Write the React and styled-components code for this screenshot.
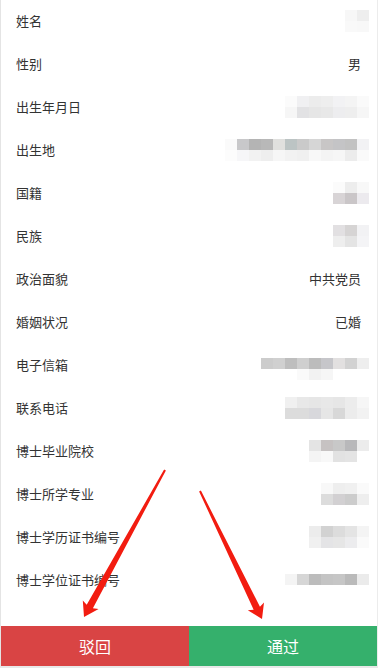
import React from "react";
import styled, { createGlobalStyle } from "styled-components";

const Global = createGlobalStyle`
  html, body { margin: 0; padding: 0; background: #ffffff; }
  body { font-family: "Noto Sans CJK SC", "Noto Sans", sans-serif; }
  * { box-sizing: border-box; }
`;

const Page = styled.div`
  position: relative;
  width: 378px;
  height: 668px;
  background: #ffffff;
  border-left: 1px solid #e4e4e4;
  border-right: 1px solid #ececec;
  border-bottom: 2px solid #e8e8e8;
  display: flex;
  flex-direction: column;
  overflow: hidden;
`;

const List = styled.div`
  display: flex;
  flex-direction: column;
  padding-bottom: 24px;
`;

const Row = styled.div`
  height: 43px;
  display: flex;
  align-items: center;
  justify-content: space-between;
  padding: 0 16px 2px 15px;
`;

const Label = styled.span`
  font-size: 13px;
  color: #333333;
  line-height: 1;
`;

const Value = styled.span`
  font-size: 13px;
  color: #333333;
  line-height: 1;
`;

const Mosaic = styled.div`
  display: grid;
  grid-auto-rows: 11px;
  grid-template-columns: repeat(${(p) => p.$cols}, 12px);
  margin-right: -8px;
  margin-top: ${(p) => p.$dy || 0}px;
`;

const Cell = styled.div`
  width: 12px;
  height: 11px;
`;

const Footer = styled.div`
  display: flex;
  height: 40px;
`;

const ActionButton = styled.button`
  flex: 1;
  border: none;
  margin: 0;
  padding: 0;
  height: 40px;
  background: ${(p) => p.$bg};
  color: #ffffff;
  font-family: "Noto Sans CJK SC", "Noto Sans", sans-serif;
  font-size: 16px;
  display: flex;
  align-items: center;
  justify-content: center;
`;

const Overlay = styled.svg`
  position: absolute;
  left: -1px;
  top: 0;
  width: 378px;
  height: 668px;
  pointer-events: none;
`;

const rows = [
  { label: "姓名", mosaic: [["#f7f7f7", "#eeeeee"], ["#f9f9f9", "#f8f8f8"]], dy: 0 },
  { label: "性别", text: "男" },
  {
    label: "出生年月日",
    mosaic: [
      ["#fbfbfb", "#f0f0f2", "#ececec", "#eeeeee", "#f2f2f4", "#f4f4f4", "#fafafa"],
      ["#f6f6f6", "#e2e2e4", "#e6e6e6", "#e8e8e8", "#ededef", "#eeeeee", "#f6f6f6"],
    ],
  },
  {
    label: "出生地",
    mosaic: [
      ["#fafafa", "#c8c8ca", "#b4b4b4", "#b8b8b8", "#e0e0de", "#bcc4c4", "#cacaca", "#d6d6d6", "#c8c6c6", "#c4c4c6", "#c2c2c2", "#f2f2f4"],
      ["#fcfcfc", "#f6f6f8", "#f2f2f2", "#eeeeee", "#f6f6f6", "#f2f2f2", "#f0f0f0", "#f8f8f8", "#f4f4f4", "#f6f6f6", "#ececec", "#fafafa"],
    ],
  },
  {
    label: "国籍",
    mosaic: [
      ["#fbfbfb", "#ededed", "#f8f8f8"],
      ["#d8d4d6", "#cac6c8", "#eceaee"],
    ],
  },
  {
    label: "民族",
    mosaic: [
      ["#e2e0e2", "#d6d4d4", "#f2f2f4"],
      ["#eeeeee", "#e4e4e4", "#f4f4f6"],
    ],
  },
  { label: "政治面貌", text: "中共党员" },
  { label: "婚姻状况", text: "已婚" },
  {
    label: "电子信箱",
    mosaic: [
      ["#cccccc", "#d0d0d0", "#bebebe", "#cfcfcf", "#bcbcbc", "#c6c6ca", "#e2e0e0", "#d2d2d2", "#eeeeee"],
      ["#ffffff", "#ffffff", "#ffffff", "#fafafa", "#f2f2f2", "#f6f6f6", "#ffffff", "#ffffff", "#ffffff"],
    ],
    dy: 8,
  },
  {
    label: "联系电话",
    mosaic: [
      ["#f0f0f0", "#e8e8e8", "#e6e6e6", "#e8e8e8", "#e6e6e6", "#ececec", "#f6f6f6"],
      ["#dcdcdc", "#dcdcdc", "#d8d8dc", "#e6e6e6", "#d8d8d8", "#ececec", "#f2f2f2"],
    ],
  },
  {
    label: "博士毕业院校",
    mosaic: [
      ["#e4e4e4", "#c6c2c2", "#c8c8c8", "#b8b8ba", "#ececec"],
      ["#f4f4f4", "#f8f8f8", "#e2e2e2", "#e4e4e4", "#ffffff"],
    ],
  },
  {
    label: "博士所学专业",
    mosaic: [
      ["#f8f8f8", "#eeeeee", "#f0f0f0", "#fafafa"],
      ["#dcdcdc", "#d2d0d2", "#cccccc", "#eeeeee"],
    ],
  },
  {
    label: "博士学历证书编号",
    mosaic: [
      ["#ececec", "#d2d2d2", "#dcdcdc", "#e4e4e4", "#f4f4f4"],
      ["#f0f0f0", "#e4e4e6", "#e6e6e6", "#ececee", "#fafafa"],
    ],
  },
  {
    label: "博士学位证书编号",
    mosaic: [["#f4f4f4", "#d6d6d6", "#bcbcbc", "#c4c4c4", "#c6c6c6", "#bababa", "#ebebeb"]],
  },
];

function Blur({ grid, dy }) {
  const cols = grid[0].length;
  return (
    <Mosaic $cols={cols} $dy={dy}>
      {grid.flatMap((r, i) => r.map((c, j) => <Cell key={i + "-" + j} style={{ background: c }} />))}
    </Mosaic>
  );
}

export default function App() {
  return (
    <>
      <Global />
      <Page>
        <List>
          {rows.map((r) => (
            <Row key={r.label}>
              <Label>{r.label}</Label>
              {r.text ? <Value>{r.text}</Value> : <Blur grid={r.mosaic} dy={r.dy} />}
            </Row>
          ))}
        </List>
        <Footer>
          <ActionButton $bg="#d94444">驳回</ActionButton>
          <ActionButton $bg="#35b06c">通过</ActionButton>
        </Footer>
        <Overlay viewBox="0 0 378 668">
          <polygon
            fill="#f21c10"
            points="165.9,470.5 92.9,608.2 98.6,609 84,617 82.8,600.4 86.7,604.8 164.1,469.5"
          />
          <polygon
            fill="#f21c10"
            points="200.9,490.6 259.95,606.7 264,602.5 262,619 247.8,610.3 253.65,609.7 199.1,491.4"
          />
        </Overlay>
      </Page>
    </>
  );
}
